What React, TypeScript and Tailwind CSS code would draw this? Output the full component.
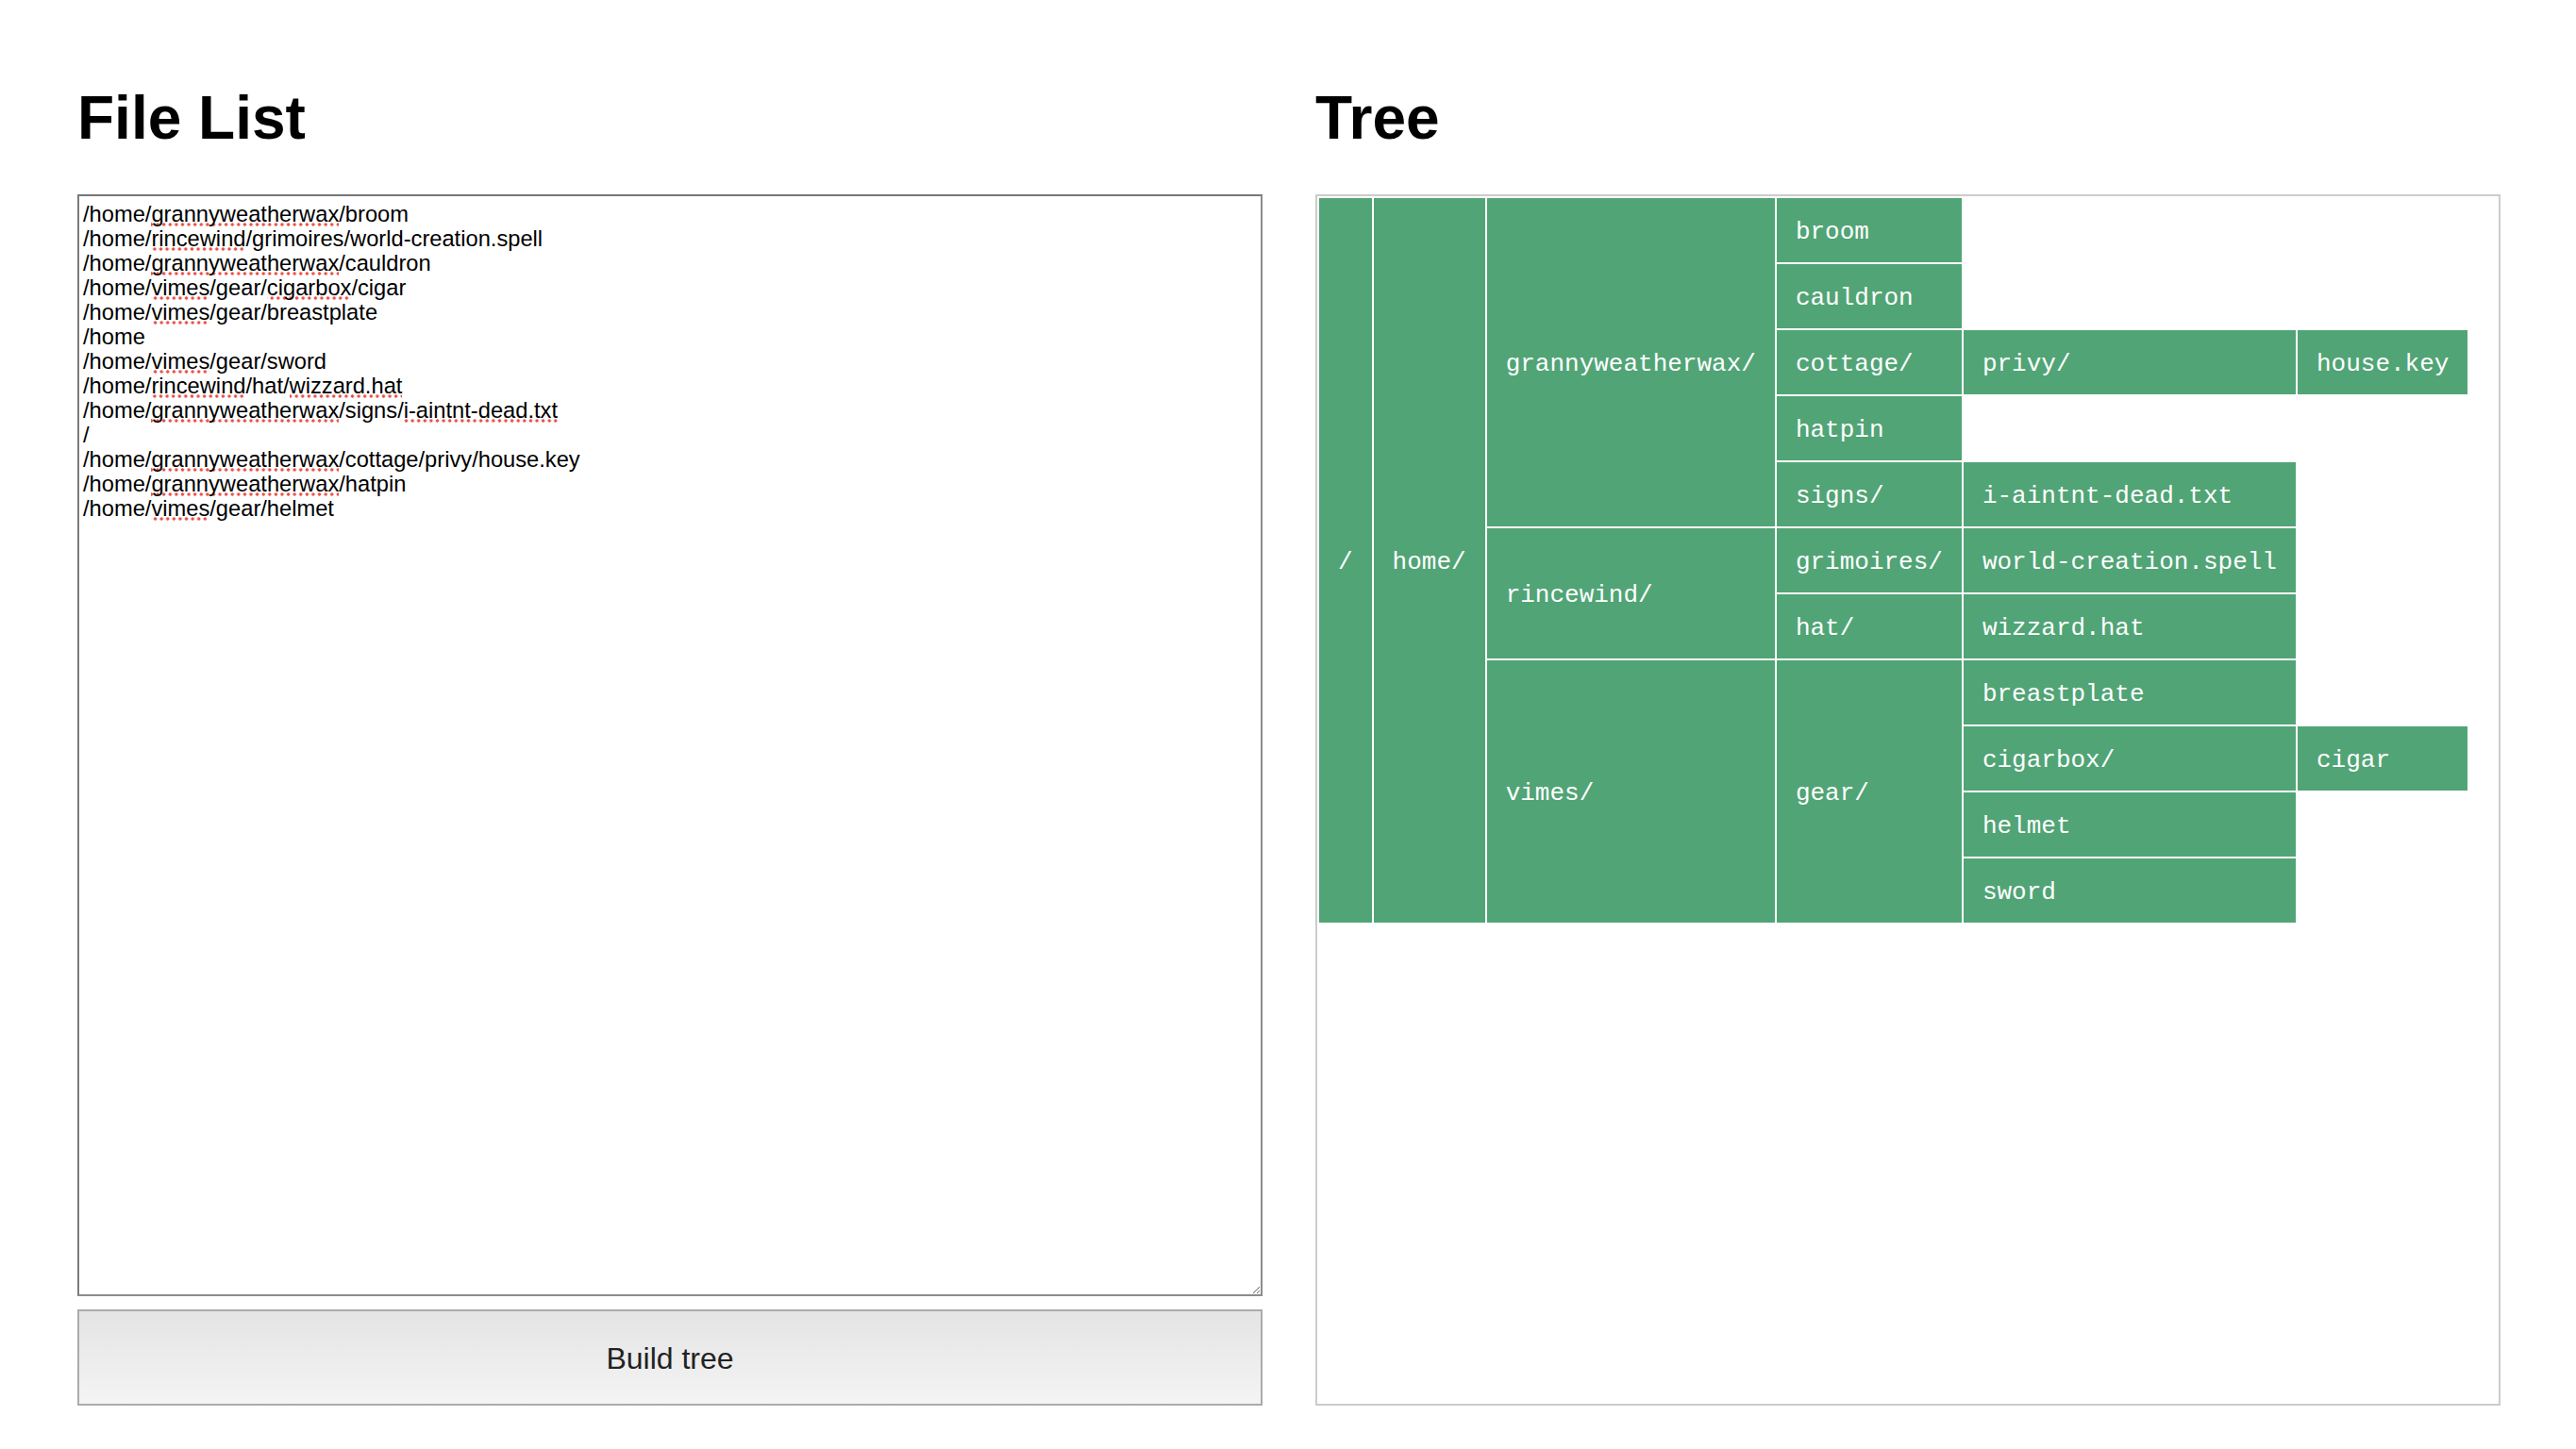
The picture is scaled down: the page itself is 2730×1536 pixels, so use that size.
import React from "react";

// Ruta de ejemplo; las palabras marcadas salen con subrayado de corrector.
const LINES: (string | { typo: string })[][] = [
  ["/home/", { typo: "grannyweatherwax" }, "/broom"],
  ["/home/", { typo: "rincewind" }, "/grimoires/world-creation.spell"],
  ["/home/", { typo: "grannyweatherwax" }, "/cauldron"],
  ["/home/", { typo: "vimes" }, "/gear/", { typo: "cigarbox" }, "/cigar"],
  ["/home/", { typo: "vimes" }, "/gear/breastplate"],
  ["/home"],
  ["/home/", { typo: "vimes" }, "/gear/sword"],
  ["/home/", { typo: "rincewind" }, "/hat/", { typo: "wizzard.hat" }],
  ["/home/", { typo: "grannyweatherwax" }, "/signs/", { typo: "i-aintnt-dead.txt" }],
  ["/"],
  ["/home/", { typo: "grannyweatherwax" }, "/cottage/privy/house.key"],
  ["/home/", { typo: "grannyweatherwax" }, "/hatpin"],
  ["/home/", { typo: "vimes" }, "/gear/helmet"],
];

type Cell = { label: string; rows?: number };

// Cada fila de la tabla: celdas que empiezan en esa fila.
const TREE: Cell[][] = [
  [{ label: "/", rows: 11 }, { label: "home/", rows: 11 }, { label: "grannyweatherwax/", rows: 5 }, { label: "broom" }],
  [{ label: "cauldron" }],
  [{ label: "cottage/" }, { label: "privy/" }, { label: "house.key" }],
  [{ label: "hatpin" }],
  [{ label: "signs/" }, { label: "i-aintnt-dead.txt" }],
  [{ label: "rincewind/", rows: 2 }, { label: "grimoires/" }, { label: "world-creation.spell" }],
  [{ label: "hat/" }, { label: "wizzard.hat" }],
  [{ label: "vimes/", rows: 4 }, { label: "gear/", rows: 4 }, { label: "breastplate" }],
  [{ label: "cigarbox/" }, { label: "cigar" }],
  [{ label: "helmet" }],
  [{ label: "sword" }],
];

function Heading({ children }: { children: React.ReactNode }) {
  return (
    <h1 className="text-[64px] leading-[74px] font-bold text-black font-['Liberation_Sans',Arial,sans-serif]">
      {children}
    </h1>
  );
}

export default function App() {
  return (
    <div className="min-h-screen bg-white pl-[82px] pr-[80px] pt-[88px] font-['Liberation_Sans',Arial,sans-serif]">
      <div className="grid grid-cols-2 gap-[56px]">
        <section className="flex flex-col">
          <Heading>File List</Heading>
          <div className="mt-[44px] h-[1168px] box-border resize overflow-auto border-2 border-[#8c8c8c] border-t-[#767676] border-l-[#7c7c7c] px-[4px] pt-[6px] pb-[4px] text-[23.7px] leading-[26px] text-black whitespace-pre">
            {LINES.map((parts, i) => (
              <div key={i}>
                {parts.map((p, j) =>
                  typeof p === "string" ? (
                    <span key={j}>{p}</span>
                  ) : (
                    <span
                      key={j}
                      className="bg-[radial-gradient(circle,#e8544b_1.6px,transparent_2.1px)] bg-[length:6.6px_4.5px] bg-repeat-x bg-bottom"
                    >
                      {p.typo}
                    </span>
                  )
                )}
              </div>
            ))}
          </div>
          <button className="mt-[14px] h-[102px] box-border border-2 border-[#ababab] bg-gradient-to-b from-[#e4e4e4] to-[#f4f4f4] pt-[2px] text-[32px] text-[#222]">
            Build tree
          </button>
        </section>

        <section className="flex flex-col">
          <Heading>Tree</Heading>
          <div className="mt-[44px] h-[1284px] box-border border-2 border-[#cccccc] bg-white">
            <table className="border-separate border-spacing-[2px] font-['Liberation_Mono','Courier_New',monospace] text-[26px] leading-[28px] text-white">
              <tbody>
                {TREE.map((row, i) => (
                  <tr key={i}>
                    {row.map((c) => (
                      <td
                        key={c.label}
                        rowSpan={c.rows}
                        className="bg-[#51a476] px-[20px] pt-[22px] pb-[18px] align-middle text-left whitespace-nowrap"
                      >
                        {c.label}
                      </td>
                    ))}
                  </tr>
                ))}
              </tbody>
            </table>
          </div>
        </section>
      </div>
    </div>
  );
}
